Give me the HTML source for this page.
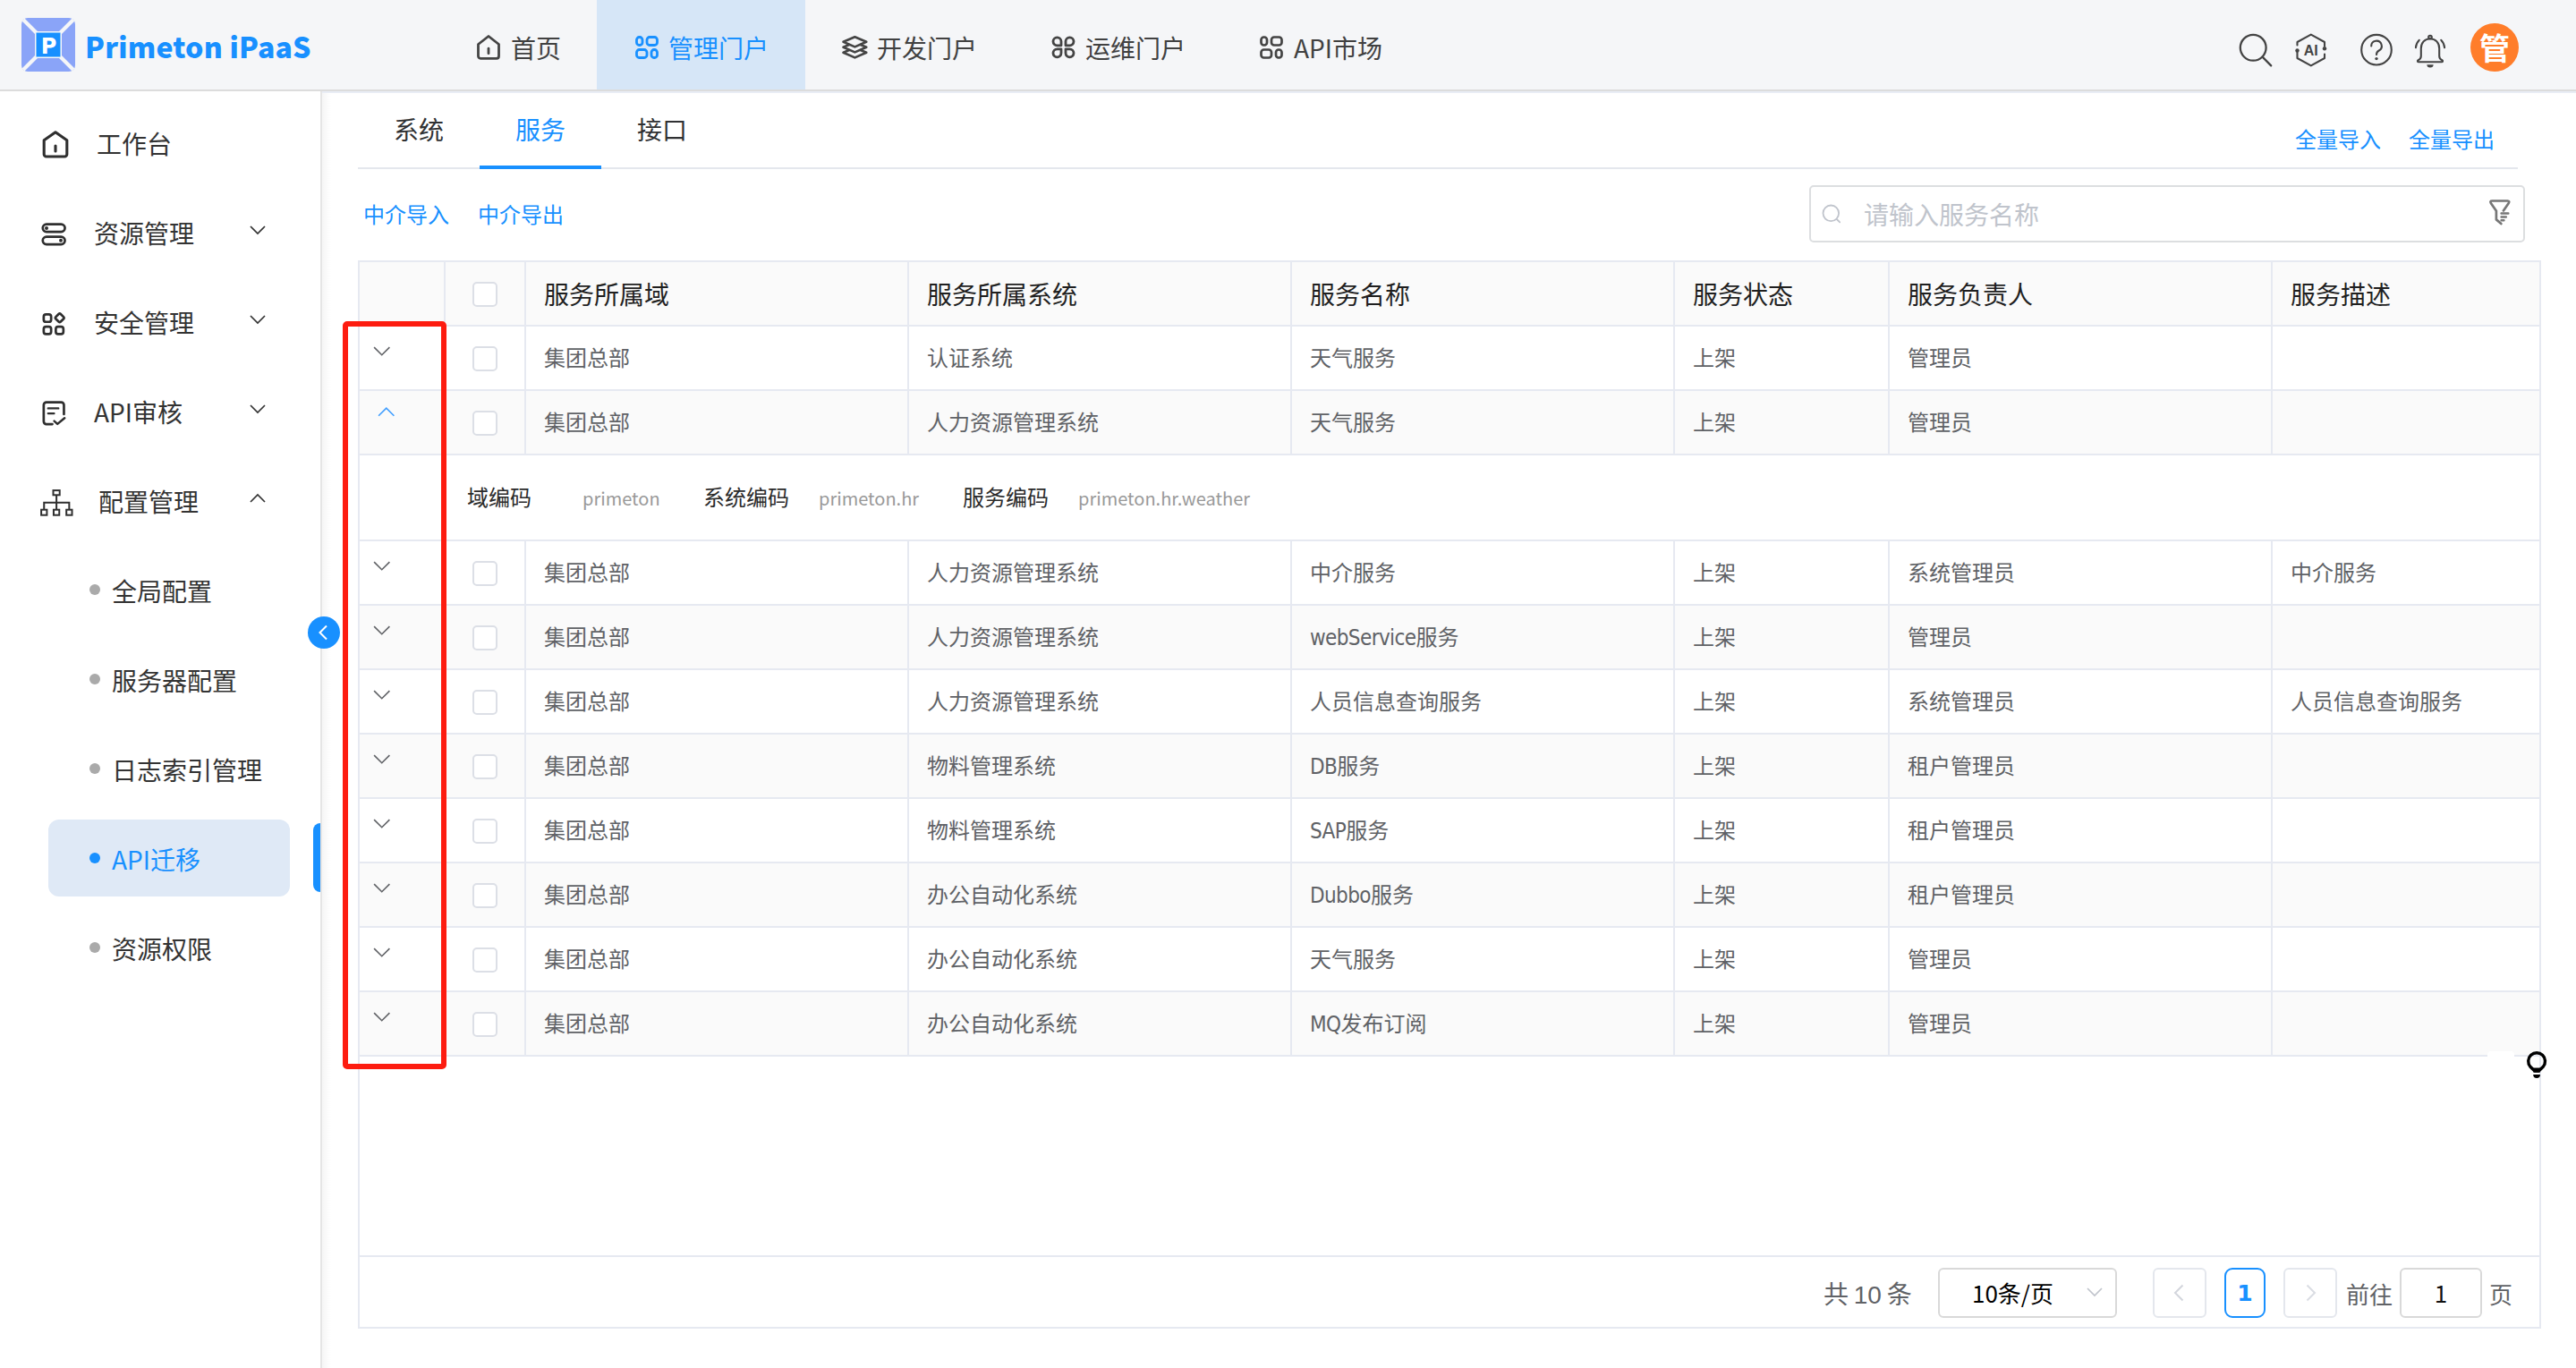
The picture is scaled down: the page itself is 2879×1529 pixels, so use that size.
<!DOCTYPE html>
<html lang="zh-CN">
<head>
<meta charset="utf-8">
<title>Primeton iPaaS</title>
<style>
*{box-sizing:border-box;margin:0;padding:0}
html,body{width:2879px;height:1529px;overflow:hidden;background:#fff}
body{position:relative;font-family:"Noto Sans CJK SC","Liberation Sans",sans-serif;color:#333;-webkit-font-smoothing:antialiased}
.abs{position:absolute}
svg{display:block;overflow:visible}
/* header */
#hd{position:absolute;left:0;top:0;width:2879px;height:102px;background:#f5f6f8;border-bottom:2px solid #dcdcdc}
#hdsh{position:absolute;left:360px;top:102px;width:2519px;height:2px;background:#e9edf5}
#logo{position:absolute;left:24px;top:20px;width:60px;height:60px}
#title{position:absolute;left:95px;top:28px;letter-spacing:.2px;height:46px;line-height:46px;font-family:"Noto Sans CJK SC","DejaVu Sans",sans-serif;font-size:32px;font-weight:900;color:#1890ff;white-space:nowrap}
.nav{position:absolute;top:0;height:100px;width:233px}
.nav.on{background:#d6e6f7}
.nav .ic{position:absolute;left:42px;top:39px;width:28px;height:28px}
.nav .tx{position:absolute;left:80px;top:33px;height:40px;line-height:40px;font-size:28px;color:#414141;white-space:nowrap}
.nav.on .tx{color:#1890ff}
/* sidebar */
#sb{position:absolute;left:0;top:102px;width:360px;height:1427px;background:#fff;border-right:2px solid #e5e5e5}
#sbsh{position:absolute;left:360px;top:104px;width:10px;height:1425px;background:linear-gradient(90deg,rgba(0,0,0,.038),rgba(0,0,0,0))}
.mi{position:absolute;left:0;width:358px;height:100px}
.mi .ic{position:absolute}
.mi .tx{position:absolute;top:30px;height:40px;line-height:40px;font-size:28px;color:#333;white-space:nowrap}
.mi .ar{position:absolute;left:279px;top:42px;width:18px;height:10px}
.si{position:absolute;left:0;width:358px;height:100px}
.si .dot{position:absolute;left:100px;top:43px;width:12px;height:12px;border-radius:50%;background:#aaa}
.si .tx{position:absolute;left:125px;top:30px;height:40px;line-height:40px;font-size:28px;color:#333;white-space:nowrap}
.si.on .tx{color:#1890ff}
.si.on .dot{background:#1890ff}
/* main */
.tab{position:absolute;top:104px;height:83px;line-height:81px;font-size:28px;color:#303133;width:136px;text-align:center}
.tab.on{color:#1890ff}
.lnk{position:absolute;font-size:24px;line-height:36px;height:36px;color:#1890ff;white-space:nowrap}
/* table */
#tbw{position:absolute;left:400px;top:291px;width:2440px;height:1194px;border:2px solid #e6e9f1;background:#fff}
table{border-collapse:separate;border-spacing:0;table-layout:fixed;width:2438px;position:absolute;left:0;top:0}
th,td{height:72px;border-right:2px solid #e6e9f1;border-bottom:2px solid #e6e9f1;padding:0 0 0 20px;line-height:36px;text-align:left;vertical-align:middle;white-space:nowrap;overflow:hidden;font-weight:400}
th{background:#fafafa;font-size:28px;color:#1f1f1f}
td{font-size:24px;color:#606266;padding-bottom:2px}
td.nb,th.nb{border-right-color:transparent}
tr.st td{background:#fafafa}
td.ex{height:96px;padding:0;border-right:2px solid #e6e9f1;position:relative}
.cb{display:block;width:28px;height:28px;border:2px solid #dcdfe6;border-radius:5px;background:#fff;margin-left:10px;position:relative;top:1px}
td .cb{top:2px}
.chv{position:absolute;left:15px;width:19.500px;height:10.800px}
.exk{position:absolute;top:26px;height:40px;line-height:40px;font-size:24px;color:#2b2b2b}
.exv{position:absolute;top:28px;height:40px;line-height:40px;font-size:20px;color:#999}
/* pagination */
.pg{position:absolute;top:1417px;height:56px;border:2px solid #d9d9d9;border-radius:6px;background:#fff}
.pgt{position:absolute;top:1423px;height:44px;line-height:44px;font-size:26px;color:#606266;white-space:nowrap}
.lt{font-family:"DejaVu Sans","Liberation Sans",sans-serif;font-stretch:condensed;letter-spacing:-.6px;line-height:1}
</style>
</head>
<body>
<!-- HEADER -->
<div id="hd"></div>
<div id="hdsh"></div>
<svg id="logo" viewBox="0 0 60 60">
  <rect x="0" y="0" width="60" height="60" rx="7" fill="#8aa4f8"/>
  <path d="M2 2L58 58M58 2L2 58" stroke="#f5f6f8" stroke-width="4.2"/>
  <rect x="15" y="15" width="30" height="30" fill="#f5f6f8"/>
  <rect x="16.5" y="16.5" width="27" height="27" fill="#1890ff"/>
  <text x="30.5" y="39.5" text-anchor="middle" font-family="'DejaVu Sans','Liberation Sans',sans-serif" font-weight="700" font-size="24" fill="#fff">P</text>
</svg>
<div id="title">Primeton iPaaS</div>

<div class="nav" style="left:491px;width:176px">
  <svg class="ic" viewBox="0 0 28 28" fill="none" stroke="#444" stroke-width="2.8" stroke-linejoin="round" stroke-linecap="round"><path d="M1.500 10.500L13 1.500L24.500 10.500V23.800a2.500 2.500 0 0 1-2.500 2.500H4A2.500 2.500 0 0 1 1.500 23.800Z"/><path d="M13 15.200v5.500"/></svg>
  <div class="tx">首页</div>
</div>
<div class="nav on" style="left:667px">
  <svg class="ic" style="left:43px" viewBox="0 0 28 28" fill="none" stroke="#1890ff" stroke-width="2.800"><rect x="1.5" y="2.5" width="6.5" height="9" rx="3"/><rect x="13" y="2.5" width="11.5" height="9" rx="3"/><rect x="1.5" y="16.5" width="11.5" height="9" rx="3"/><rect x="18" y="16.5" width="6.5" height="9" rx="3"/></svg>
  <div class="tx">管理门户</div>
</div>
<div class="nav" style="left:900px">
  <svg class="ic" style="left:41px;top:39px;width:30px;height:28px" viewBox="0 0 30 28" fill="none" stroke="#444" stroke-width="2.600" stroke-linejoin="round" stroke-linecap="round"><path d="M14.400 2.200L27.300 7.800L14.400 13.400L1.500 7.800Z"/><path d="M8 11L1.500 13.800L14.400 19.400L27.300 13.800L20.800 11"/><path d="M8 17L1.500 19.800L14.400 25.400L27.300 19.800L20.800 17"/></svg>
  <div class="tx">开发门户</div>
</div>
<div class="nav" style="left:1133px">
  <svg class="ic" viewBox="0 0 28 28" fill="none" stroke="#444" stroke-width="2.800" stroke-linejoin="round"><path d="M11 11H6.500A4.500 4.500 0 1 1 11 6.500Z" transform="translate(0 0.800)"/><path d="M11 11H6.500A4.500 4.500 0 1 1 11 6.500Z" transform="translate(27 0.800) scale(-1 1)"/><path d="M11 11H6.500A4.500 4.500 0 1 1 11 6.500Z" transform="translate(0 26.800) scale(1 -1)"/><path d="M11 11H6.500A4.500 4.500 0 1 1 11 6.500Z" transform="translate(27 26.800) scale(-1 -1)"/></svg>
  <div class="tx">运维门户</div>
</div>
<div class="nav" style="left:1366px">
  <svg class="ic" viewBox="0 0 28 28" fill="none" stroke="#444" stroke-width="2.700"><rect x="1.500" y="2.500" width="6.500" height="9" rx="3"/><rect x="13" y="2.500" width="11.500" height="9" rx="3"/><rect x="1.500" y="16.500" width="11.500" height="9" rx="3"/><rect x="18" y="16.500" width="6.500" height="9" rx="3"/></svg>
  <div class="tx">API市场</div>
</div>

<!-- right icons -->
<svg class="abs" style="left:2500px;top:36px;width:42px;height:42px" viewBox="0 0 42 42" fill="none" stroke="#444" stroke-width="2.300" stroke-linecap="round"><circle cx="18.200" cy="17.300" r="14.400"/><path d="M28.6 27.6L38.2 37.4"/></svg>
<svg class="abs" style="left:2562px;top:36px;width:42px;height:42px" viewBox="0 0 42 42" fill="none" stroke="#444" stroke-width="2.100" stroke-linejoin="round" stroke-linecap="round"><path d="M5.5 14.5V11L20.8 2.6L36 11v4.5M36 24.5V29L20.8 37.4L5.5 29v-6.5"/><circle cx="5.5" cy="20.5" r="2.2" fill="#444" stroke="none"/><circle cx="36" cy="18.2" r="2.2" fill="#444" stroke="none"/><text x="20.8" y="26" text-anchor="middle" font-family="'Liberation Sans',sans-serif" font-weight="700" font-size="16" fill="#444" stroke="none">AI</text></svg>
<svg class="abs" style="left:2635px;top:36px;width:42px;height:42px" viewBox="0 0 42 42" fill="none" stroke="#444" stroke-width="2.100" stroke-linecap="round"><circle cx="21" cy="19.7" r="16.8"/><path d="M15.2 15.4a5.8 5.8 0 1 1 8.6 5.1c-1.9 1.1-2.8 2.3-2.8 4.6"/><circle cx="21" cy="29.6" r="1.7" fill="#444" stroke="none"/></svg>
<svg class="abs" style="left:2695px;top:36.500px;width:42px;height:42px" viewBox="0 0 42 42" fill="none" stroke="#444" stroke-width="2.100" stroke-linecap="round" stroke-linejoin="round"><path d="M21 6.2c-6.2 0-10.2 4.8-10.2 11v8.6c0 2.2-1.3 3.6-3.2 4.4c-1 .5-.8 2.1.5 2.1h25.8c1.3 0 1.5-1.6.5-2.1c-1.900-.8-3.2-2.200-3.200-4.400v-8.600c0-6.200-4-11-10.200-11Z"/><circle cx="21" cy="4.6" r="1.8"/><path d="M17.400 35.300a3.600 3.200 0 0 0 7.200 0Z" fill="#444" stroke="none"/><path d="M8.8 7.800c-2.200 2.200-3.600 5.200-3.900 8.500M33.200 7.800c2.200 2.200 3.600 5.200 3.900 8.500" stroke-width="2"/></svg>
<div class="abs" style="left:2761px;top:26px;width:54px;height:54px;border-radius:50%;background:#ff7d2a;color:#fff;font-size:34px;font-weight:700;line-height:54px;text-align:center">管</div>

<!-- SIDEBAR -->
<div id="sb"></div>
<div id="sbsh"></div>
<div id="menu" class="abs" style="left:0;top:110px;width:358px">
  <div class="mi" style="top:0">
    <svg class="ic" style="left:47px;top:35px;width:30px;height:32px" viewBox="0 0 30 32" fill="none" stroke="#2f2f2f" stroke-width="3.100" stroke-linejoin="round" stroke-linecap="round"><path d="M2.200 11.800L15 2.800L27.800 11.800V27.400a2.600 2.600 0 0 1-2.600 2.600H4.800A2.600 2.600 0 0 1 2.200 27.400Z"/><path d="M15 18v6"/></svg>
    <div class="tx" style="left:108px">工作台</div>
  </div>
  <div class="mi" style="top:100px">
    <svg class="ic" style="left:45px;top:38px;width:30px;height:28px" viewBox="0 0 30 28" fill="none" stroke="#2f2f2f" stroke-width="2.700"><rect x="2.750" y="2.650" width="24.800" height="8.400" rx="4.200"/><rect x="2.750" y="16.650" width="24.800" height="8.400" rx="4.200"/><circle cx="7" cy="6.900" r="2" fill="#2f2f2f" stroke="none"/><circle cx="23" cy="20.800" r="2" fill="#2f2f2f" stroke="none"/></svg>
    <div class="tx" style="left:105px">资源管理</div>
    <svg class="ar" viewBox="0 0 18 10" fill="none" stroke="#333" stroke-width="1.700"><path d="M1 1L9 9L17 1"/></svg>
  </div>
  <div class="mi" style="top:200px">
    <svg class="ic" style="left:46px;top:38px;width:28px;height:28px" viewBox="0 0 28 28" fill="none" stroke="#2f2f2f" stroke-width="2.700"><rect x="2.850" y="3.350" width="8.300" height="8.400" rx="2.600"/><rect x="2.850" y="17.150" width="8.300" height="8.200" rx="2.600"/><rect x="16.350" y="17.150" width="8.500" height="8.200" rx="2.600"/><rect x="16.900" y="3.500" width="7.600" height="7.600" rx="1.600" transform="rotate(45 20.700 7.300)"/></svg>
    <div class="tx" style="left:105px">安全管理</div>
    <svg class="ar" viewBox="0 0 18 10" fill="none" stroke="#333" stroke-width="1.700"><path d="M1 1L9 9L17 1"/></svg>
  </div>
  <div class="mi" style="top:300px">
    <svg class="ic" style="left:46px;top:37px;width:28px;height:30px" viewBox="0 0 28 30" fill="none" stroke="#2f2f2f" stroke-width="2.700" stroke-linecap="round" stroke-linejoin="round"><path d="M25.450 16V5.550a3 3 0 0 0-3-3H5.850a3 3 0 0 0-3 3V24.050a3 3 0 0 0 3 3H12.500"/><path d="M7.800 9.400H19.200M7.800 15.100H14.400" stroke-width="2.400"/><path d="M14.600 23.600L18.200 26.900L26.200 20.200" stroke-width="2.500"/></svg>
    <div class="tx" style="left:105px">API审核</div>
    <svg class="ar" viewBox="0 0 18 10" fill="none" stroke="#333" stroke-width="1.700"><path d="M1 1L9 9L17 1"/></svg>
  </div>
  <div class="mi" style="top:400px">
    <svg class="ic" style="left:44px;top:35px;width:38px;height:32px" viewBox="0 0 38 32" fill="none" stroke="#2f2f2f" stroke-width="2"><rect x="15.500" y="3.100" width="7.200" height="5.200"/><rect x="2.100" y="24.700" width="6.300" height="6"/><rect x="15.950" y="24.700" width="6.300" height="6"/><rect x="30.200" y="24.700" width="6.300" height="6"/><path d="M19.100 8.300V24.700M5.250 24.700V16.800H33.350V24.700"/></svg>
    <div class="tx" style="left:110px">配置管理</div>
    <svg class="ar" viewBox="0 0 18 10" fill="none" stroke="#333" stroke-width="1.700"><path d="M1 9L9 1L17 9"/></svg>
  </div>
  <div class="si" style="top:500px"><span class="dot"></span><div class="tx">全局配置</div></div>
  <div class="si" style="top:600px"><span class="dot"></span><div class="tx">服务器配置</div></div>
  <div class="si" style="top:700px"><span class="dot"></span><div class="tx">日志索引管理</div></div>
  <div class="abs" style="left:54px;top:806px;width:270px;height:86px;border-radius:12px;background:#dfe9f6"></div>
  <div class="abs" style="left:350px;top:810px;width:8px;height:77px;border-radius:8px 0 0 8px;background:#1890ff"></div>
  <div class="si on" style="top:800px"><span class="dot"></span><div class="tx">API迁移</div></div>
  <div class="si" style="top:900px"><span class="dot"></span><div class="tx">资源权限</div></div>
</div>
<!-- collapse btn -->
<div class="abs" style="left:344px;top:689px;width:36px;height:36px;border-radius:50%;background:#1890ff;z-index:5">
  <svg class="abs" style="left:11px;top:9px;width:12px;height:18px" viewBox="0 0 12 18" fill="none" stroke="#fff" stroke-width="2"><path d="M10 1.500L2.500 9L10 16.500"/></svg>
</div>

<!-- MAIN -->
<div class="tab" style="left:400px">系统</div>
<div class="tab on" style="left:536px">服务</div>
<div class="tab" style="left:672px">接口</div>
<div class="abs" style="left:400px;top:187px;width:2414px;height:2px;background:#e4e7ed"></div>
<div class="abs" style="left:536px;top:185px;width:136px;height:4px;background:#1890ff"></div>
<div class="lnk" style="left:2565px;top:137px">全量导入</div>
<div class="lnk" style="left:2692px;top:137px">全量导出</div>
<div class="lnk" style="left:406px;top:221px">中介导入</div>
<div class="lnk" style="left:534px;top:221px">中介导出</div>

<!-- search box -->
<div class="abs" style="left:2022px;top:207px;width:800px;height:64px;border:2px solid #dcdee0;border-radius:5px;background:#fff">
  <svg class="abs" style="left:12px;top:19px;width:24px;height:24px" viewBox="0 0 24 24" fill="none" stroke="#c0c4cc" stroke-width="1.800" stroke-linecap="round"><circle cx="10.300" cy="10.300" r="8.800"/><path d="M16.800 17l3.400 3.400"/></svg>
  <div class="abs" style="left:59px;top:10px;height:40px;line-height:40px;font-size:28px;color:#c0c4cc;white-space:nowrap">请输入服务名称</div>
  <svg class="abs" style="left:758px;top:14px;width:26px;height:30px" viewBox="0 0 26 30" fill="none" stroke="#777" stroke-width="2.700" stroke-linejoin="round" stroke-linecap="round"><path d="M15.900 12.400L21.600 4.200Q23.300 1.500 20.500 1.500H3.200Q0.400 1.500 2 4.200L7.900 12.700V22.400L13.300 27"/><path d="M13.600 15.500h7.700M13.600 19.500h5.200M13.600 23.200h2.800" stroke-width="2.500"/></svg>
</div>

<!-- TABLE -->
<div id="tbw">
<table>
<colgroup><col style="width:96px"><col style="width:90px"><col style="width:428px"><col style="width:428px"><col style="width:428px"><col style="width:240px"><col style="width:428px"><col style="width:300px"></colgroup>
<tr><th></th><th><span class="cb"></span></th><th>服务所属域</th><th>服务所属系统</th><th>服务名称</th><th>服务状态</th><th>服务负责人</th><th>服务描述</th></tr>
<tr><td></td><td><span class="cb"></span></td><td>集团总部</td><td>认证系统</td><td>天气服务</td><td>上架</td><td>管理员</td><td></td></tr>
<tr class="st"><td></td><td><span class="cb"></span></td><td>集团总部</td><td>人力资源管理系统</td><td>天气服务</td><td>上架</td><td>管理员</td><td></td></tr>
<tr><td class="ex" colspan="8">
  <div class="exk" style="left:120px">域编码</div><div class="exv" style="left:249px">primeton</div>
  <div class="exk" style="left:384px">系统编码</div><div class="exv" style="left:513px">primeton.hr</div>
  <div class="exk" style="left:674px">服务编码</div><div class="exv" style="left:803px">primeton.hr.weather</div>
</td></tr>
<tr><td></td><td><span class="cb"></span></td><td>集团总部</td><td>人力资源管理系统</td><td>中介服务</td><td>上架</td><td>系统管理员</td><td>中介服务</td></tr>
<tr class="st"><td></td><td><span class="cb"></span></td><td>集团总部</td><td>人力资源管理系统</td><td><span class="lt">webService</span>服务</td><td>上架</td><td>管理员</td><td></td></tr>
<tr><td></td><td><span class="cb"></span></td><td>集团总部</td><td>人力资源管理系统</td><td>人员信息查询服务</td><td>上架</td><td>系统管理员</td><td>人员信息查询服务</td></tr>
<tr class="st"><td></td><td><span class="cb"></span></td><td>集团总部</td><td>物料管理系统</td><td><span class="lt">DB</span>服务</td><td>上架</td><td>租户管理员</td><td></td></tr>
<tr><td></td><td><span class="cb"></span></td><td>集团总部</td><td>物料管理系统</td><td><span class="lt">SAP</span>服务</td><td>上架</td><td>租户管理员</td><td></td></tr>
<tr class="st"><td></td><td><span class="cb"></span></td><td>集团总部</td><td>办公自动化系统</td><td><span class="lt">Dubbo</span>服务</td><td>上架</td><td>租户管理员</td><td></td></tr>
<tr><td></td><td><span class="cb"></span></td><td>集团总部</td><td>办公自动化系统</td><td>天气服务</td><td>上架</td><td>管理员</td><td></td></tr>
<tr class="st"><td></td><td><span class="cb"></span></td><td>集团总部</td><td>办公自动化系统</td><td><span class="lt">MQ</span>发布订阅</td><td>上架</td><td>管理员</td><td></td></tr>
</table>
<!-- chevrons -->
<svg class="chv" style="top:94px" viewBox="0 0 18 10" fill="none" stroke="#606266" stroke-width="1.500"><path d="M1 1L9 9L17 1"/></svg>
<svg class="chv" style="left:20px;top:162px" viewBox="0 0 18 10" fill="none" stroke="#409eff" stroke-width="1.500"><path d="M1 9L9 1L17 9"/></svg>
<svg class="chv" style="top:334px" viewBox="0 0 18 10" fill="none" stroke="#606266" stroke-width="1.500"><path d="M1 1L9 9L17 1"/></svg>
<svg class="chv" style="top:406px" viewBox="0 0 18 10" fill="none" stroke="#606266" stroke-width="1.500"><path d="M1 1L9 9L17 1"/></svg>
<svg class="chv" style="top:478px" viewBox="0 0 18 10" fill="none" stroke="#606266" stroke-width="1.500"><path d="M1 1L9 9L17 1"/></svg>
<svg class="chv" style="top:550px" viewBox="0 0 18 10" fill="none" stroke="#606266" stroke-width="1.500"><path d="M1 1L9 9L17 1"/></svg>
<svg class="chv" style="top:622px" viewBox="0 0 18 10" fill="none" stroke="#606266" stroke-width="1.500"><path d="M1 1L9 9L17 1"/></svg>
<svg class="chv" style="top:694px" viewBox="0 0 18 10" fill="none" stroke="#606266" stroke-width="1.500"><path d="M1 1L9 9L17 1"/></svg>
<svg class="chv" style="top:766px" viewBox="0 0 18 10" fill="none" stroke="#606266" stroke-width="1.500"><path d="M1 1L9 9L17 1"/></svg>
<svg class="chv" style="top:838px" viewBox="0 0 18 10" fill="none" stroke="#606266" stroke-width="1.500"><path d="M1 1L9 9L17 1"/></svg>
<div class="abs" style="left:0;top:1110px;width:2436px;height:2px;background:#e6e9f1"></div>
</div>

<!-- red highlight -->
<div class="abs" style="left:383px;top:359px;width:116px;height:836px;border:6px solid #fd1c10;border-radius:5px"></div>

<!-- PAGINATION -->
<div class="pgt" style="left:2038px;top:1426px;font-size:28px;font-family:'Liberation Sans','Noto Sans CJK SC',sans-serif;word-spacing:-2px">共 10 条</div>
<div class="pg" style="left:2166px;width:200px"></div>
<div class="pgt" style="left:2204px;color:#000">10条/页</div>
<svg class="abs" style="left:2332px;top:1439px;width:18px;height:10px" viewBox="0 0 18 10" fill="none" stroke="#c0c4cc" stroke-width="1.700"><path d="M1 1L9 9L17 1"/></svg>
<div class="pg" style="left:2406px;width:60px;border-color:#e4e7ed"></div>
<svg class="abs" style="left:2429px;top:1435px;width:12px;height:20px" viewBox="0 0 12 20" fill="none" stroke="#d3d6dd" stroke-width="2"><path d="M10.500 1.500L2 10L10.500 18.500"/></svg>
<div class="pg" style="left:2486px;width:46px;border-color:#1890ff;border-radius:9px"></div>
<div class="pgt" style="left:2486px;top:1424px;width:46px;text-align:center;color:#1890ff;font-weight:700;font-size:25px;font-family:'DejaVu Sans',sans-serif">1</div>
<div class="pg" style="left:2552px;width:60px;border-color:#e4e7ed"></div>
<svg class="abs" style="left:2577px;top:1435px;width:12px;height:20px" viewBox="0 0 12 20" fill="none" stroke="#dadde3" stroke-width="2"><path d="M1.500 1.500L10 10L1.500 18.500"/></svg>
<div class="pgt" style="left:2622px;top:1424px">前往</div>
<div class="pg" style="left:2682px;width:92px"></div>
<div class="pgt" style="left:2682px;width:92px;text-align:center;color:#111">1</div>
<div class="pgt" style="left:2782px;top:1424px">页</div>

<!-- bulb -->
<div class="abs" style="left:2780px;top:1175px;width:30px;height:7px;background:#fff;border-radius:4px 4px 0 0"></div>
<svg class="abs" style="left:2822px;top:1174px;width:26px;height:34px" viewBox="0 0 26 34" fill="none" stroke="#000" stroke-width="3.400" stroke-linejoin="round"><path d="M10.800 23L5.900 18.240A9.400 9.400 0 1 1 20.300 18.240L15.400 23Z"/><path d="M9.300 19.500h7.600v5h-7.600Z" fill="#000" stroke="none"/><path d="M9.200 27h7.800a3.900 3.900 0 0 1-7.800 0Z" fill="#000" stroke="none"/></svg>
</body>
</html>
